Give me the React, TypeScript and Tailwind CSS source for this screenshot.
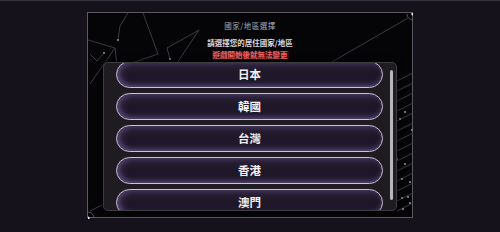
import React from 'react';

const regions = ['日本', '韓國', '台灣', '香港', '澳門'];

function FrameLines() {
  const hatch = [60, 70, 80, 90, 100, 110, 120, 130, 140, 150, 160, 170, 180, 190];
  const dots: [number, number][] = [
    [30, 27], [16, 40], [82, 46], [324, 117], [309, 146], [317, 151], [322, 169],
    [314, 166], [320, 184], [314, 185], [322, 190], [315, 196], [317, 99], [312, 106],
  ];
  return (
    <svg className="absolute inset-0 pointer-events-none" width="325" height="206" viewBox="0 0 325 206" fill="none">
      <g stroke="#4a4850" strokeWidth="0.8">
        <polyline points="40,0 32,13 30,27" />
        <polyline points="55,0 70,41 44,50" />
        <polyline points="0,27 27,35 29,52" />
        <polyline points="27,35 2,71" />
        <polyline points="2,41 9,48 16,40" />
        <polyline points="79,35 82,46" />
        <polyline points="79,35 111,17 89,50" />
        <polyline points="320,5 242,50" />
        <polyline points="2,198 14,192" />
        {hatch.map((y) => (
          <line key={y} x1="309" y1={y + 8} x2="325" y2={y} />
        ))}
      </g>
      <g fill="#8a8890">
        {dots.map(([x, y], i) => (
          <circle key={i} cx={x} cy={y} r="1.1" />
        ))}
      </g>
      <path d="M319 1 A6 6 0 0 0 325 7" stroke="#6a6870" strokeWidth="0.8" />
      <path d="M0 199 A6 6 0 0 1 6 205" stroke="#6a6870" strokeWidth="0.8" />
      <circle cx="325" cy="1" r="1.6" fill="#f2f2f2" />
      <circle cx="0" cy="205" r="1.6" fill="#f2f2f2" />
    </svg>
  );
}

export default function App() {
  return (
    <div
      className="w-[500px] h-[232px] bg-[#15121b] border-t border-[#34313a] flex justify-center pt-[11px] overflow-hidden"
      style={{ fontFamily: '"Noto Sans CJK TC", "Noto Sans", sans-serif' }}
    >
      <div className="relative w-[326px] h-[206px] bg-[#050407] border border-[#5c5a60] flex flex-col items-center">
        <FrameLines />
        <div className="relative h-[49px] flex flex-col items-center pt-[9px] leading-none">
          <p className="text-[7.5px] text-[#a9a7ad] tracking-[0.5px]">國家/地區選擇</p>
          <p className="mt-[9px] text-[7.5px] font-bold text-[#dcdadf]">請選擇您的居住國家/地區</p>
          <p className="mt-[5px] text-[7.5px] font-bold text-[#f26464] bg-[#5a1a1f]/50 px-[1px]">遊戲開始後就無法變更</p>
        </div>
        <div className="relative w-[294px] h-[149px] bg-[#1e1c21] border border-[#3e3c42] rounded-[5px] shadow-[0_0_6px_rgba(0,0,0,0.8)] flex">
          <div className="w-[280px] overflow-hidden pl-[12px]">
            <div className="flex flex-col gap-[5px] -mt-[2px]">
              {regions.map((r) => (
                <button
                  key={r}
                  className="h-[27px] w-[267px] shrink-0 rounded-full border-[1.5px] border-[#c9c1d4] bg-gradient-to-b from-[#2a2036] via-[#1e1728] to-[#241c30] shadow-[inset_3px_0_6px_rgba(140,115,190,0.5),inset_0_-2px_4px_rgba(110,90,150,0.35)] flex items-center justify-center text-[11.5px] font-semibold text-[#f2f0f4] leading-none"
                >
                  {r}
                </button>
              ))}
            </div>
          </div>
          <div className="ml-[6px] mt-[7px] w-[3px] h-[130px] rounded-full bg-[#b9b7bc]" />
        </div>
      </div>
    </div>
  );
}
